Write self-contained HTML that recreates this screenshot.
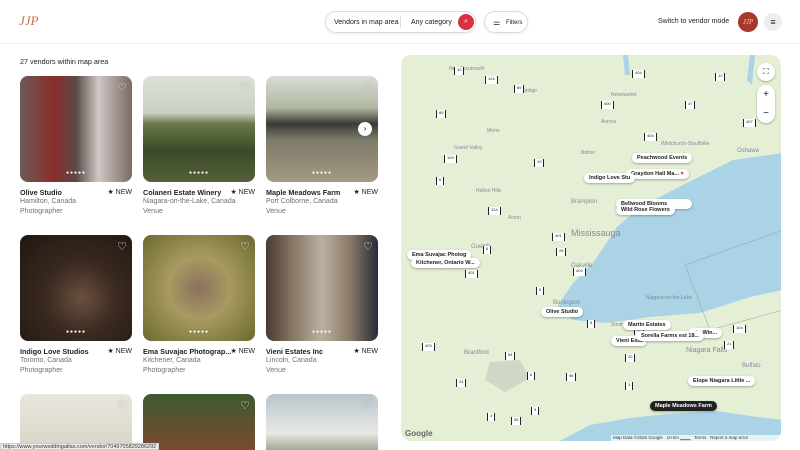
<!DOCTYPE html>
<html><head><meta charset="utf-8"><style>
*{margin:0;padding:0;box-sizing:border-box}
html,body{width:800px;height:450px;overflow:hidden}
body{background:#fff;font-family:"Liberation Sans",sans-serif;color:#222;position:relative}
.hdr{position:absolute;left:0;top:0;width:800px;height:44px;border-bottom:1px solid #eee}
.pill{position:absolute;top:11px;height:22px;border:1px solid #ddd;border-radius:11px;background:#fff;box-shadow:0 1px 3px rgba(0,0,0,.08);font-size:7px;line-height:20px}
.pill span{top:1px}
.t{position:absolute;font-size:7px;white-space:nowrap}
.card{position:absolute;width:112px}
.img{position:absolute;width:112px;height:106px;border-radius:8px;overflow:hidden}
.heart{position:absolute;right:5px;top:5px;font-size:11px;color:#fff;text-shadow:0 0 2px rgba(0,0,0,.6)}
.dots{position:absolute;bottom:6px;left:0;width:100%;text-align:center;font-size:5px;color:#fff;letter-spacing:1px}
.nm{position:absolute;font-size:7.2px;font-weight:bold;white-space:nowrap}
.new{position:absolute;right:0;font-size:7px}
.sub{position:absolute;font-size:7px;color:#717171;white-space:nowrap}
.lbl{position:absolute;background:#fff;border-radius:8px;font-size:5.5px;font-weight:bold;padding:2px 5px;box-shadow:0 1px 2px rgba(0,0,0,.3);white-space:nowrap}
.sh{position:absolute;font-size:4px;border-left:1.5px solid #222;border-right:1.5px solid #222;padding:0 2px;background:#fff;height:8px;line-height:6px}
.town{position:absolute;font-size:5px;color:#889;white-space:nowrap}
</style></head><body>
<div class="hdr">
 <div class="t" style="left:19px;top:13px;font-family:'Liberation Serif',serif;font-size:13px;color:#c0704f;font-style:italic">JJP</div>
 <div class="pill" style="left:325px;width:151px"><span style="position:absolute;left:8px">Vendors in map area</span><span style="position:absolute;left:74px;top:4px;width:1px;height:12px;background:#ddd"></span><span style="position:absolute;left:85px">Any category</span><span style="position:absolute;left:132px;top:2px;width:16px;height:16px;border-radius:8px;background:#d6323f;color:#fff;text-align:center;line-height:16px;font-size:7px">⌕</span></div>
 <div class="pill" style="left:484px;width:44px;font-size:6px"><span style="position:absolute;left:8px;font-size:8px">⚌</span><span style="position:absolute;left:21px">Filters</span></div>
 <div class="t" style="left:658px;top:18px">Switch to vendor mode</div>
 <div style="position:absolute;left:738px;top:12px;width:20px;height:20px;border-radius:10px;background:#a8392a;color:#f3c9b0;font-size:7px;text-align:center;line-height:20px;font-family:'Liberation Serif',serif;font-style:italic">JJP</div>
 <div style="position:absolute;left:764px;top:13px;width:18px;height:18px;border-radius:9px;background:#eee;text-align:center;line-height:18px;font-size:9px">≡</div>
</div>
<div class="t" style="left:20px;top:57px;font-size:7.2px">27 vendors within map area</div>

<div class="card" style="left:20px;top:76px"><div class="img" style="background:linear-gradient(90deg,#6a5a55 0,#8b2e2a 30%,#5a4a48 50%,#cfc8c4 70%,#7a6a66 100%)"><div class="heart">♡</div><div class="dots">●●●●●</div></div><div class="nm" style="top:112px">Olive Studio</div><div class="new" style="top:112px">★ NEW</div><div class="sub" style="top:122px">Hamilton, Canada</div><div class="sub" style="top:132px">Photographer</div></div>
<div class="card" style="left:143px;top:76px"><div class="img" style="background:linear-gradient(180deg,#dbe2d8 0,#c8d0c4 35%,#6b7a4a 45%,#3c4a28 70%,#54603a 100%)"><div class="heart">♡</div><div class="dots">●●●●●</div></div><div class="nm" style="top:112px">Colaneri Estate Winery</div><div class="new" style="top:112px">★ NEW</div><div class="sub" style="top:122px">Niagara-on-the-Lake, Canada</div><div class="sub" style="top:132px">Venue</div></div>
<div class="card" style="left:266px;top:76px"><div class="img" style="background:linear-gradient(180deg,#d8dcd6 0,#b0b8a0 30%,#3a3a34 45%,#7b7a68 60%,#a59a82 100%)"><div class="heart">♡</div><div style="position:absolute;right:6px;top:46px;width:14px;height:14px;border-radius:7px;background:#fff;font-size:8px;text-align:center;line-height:14px">›</div><div class="dots">●●●●●</div></div><div class="nm" style="top:112px">Maple Meadows Farm</div><div class="new" style="top:112px">★ NEW</div><div class="sub" style="top:122px">Port Colborne, Canada</div><div class="sub" style="top:132px">Venue</div></div>
<div class="card" style="left:20px;top:235px"><div class="img" style="background:radial-gradient(circle at 55% 60%,#6a5040 0,#3a2a20 40%,#1e1610 100%)"><div class="heart">♡</div><div class="dots">●●●●●</div></div><div class="nm" style="top:112px">Indigo Love Studios</div><div class="new" style="top:112px">★ NEW</div><div class="sub" style="top:122px">Toronto, Canada</div><div class="sub" style="top:132px">Photographer</div></div>
<div class="card" style="left:143px;top:235px"><div class="img" style="background:radial-gradient(circle at 50% 50%,#8a7060 0,#a89a60 40%,#6a6a30 100%)"><div class="heart">♡</div><div class="dots">●●●●●</div></div><div class="nm" style="top:112px">Ema Suvajac Photograp...</div><div class="new" style="top:112px">★ NEW</div><div class="sub" style="top:122px">Kitchener, Canada</div><div class="sub" style="top:132px">Photographer</div></div>
<div class="card" style="left:266px;top:235px"><div class="img" style="background:linear-gradient(90deg,#4a3a30 0,#8a7a68 25%,#bab0a0 50%,#8a7a68 75%,#2a2a38 100%)"><div class="heart">♡</div><div class="dots">●●●●●</div></div><div class="nm" style="top:112px">Vieni Estates Inc</div><div class="new" style="top:112px">★ NEW</div><div class="sub" style="top:122px">Lincoln, Canada</div><div class="sub" style="top:132px">Venue</div></div>
<div class="card" style="left:20px;top:394px"><div class="img" style="height:56px;border-radius:8px 8px 0 0;background:linear-gradient(180deg,#e8e6dc,#d8d4c8)"><div class="heart">♡</div></div></div>
<div class="card" style="left:143px;top:394px"><div class="img" style="height:56px;border-radius:8px 8px 0 0;background:linear-gradient(180deg,#3c5a30,#7a4a30)"><div class="heart">♡</div></div></div>
<div class="card" style="left:266px;top:394px"><div class="img" style="height:56px;border-radius:8px 8px 0 0;background:linear-gradient(180deg,#b8c4cc,#e8e8e4 70%,#a0a898)"><div class="heart">♡</div></div></div>

<div style="position:absolute;left:401px;top:55px;width:380px;height:386px;border-radius:10px;overflow:hidden;background:#e4efd6">
<svg width="380" height="386" style="position:absolute;left:0;top:0">
<g transform="translate(-401,-55)">
<polygon fill="#aad3e6" points="783,153 733,160 687,183 640,207 617,227 593,263 573,283 557,307 573,320 607,323 650,317 700,313 750,297 783,290"/>
<polygon fill="#aad3e6" points="560,441 590,425 630,418 667,414 717,411 750,416 783,420 783,441"/>
<polygon fill="#aad3e6" points="623,55 628,55 630,75 625,75"/>
<polygon fill="#aad3e6" points="750,55 755,55 752,85 747,80"/>
<polyline fill="none" stroke="#999" stroke-width=".5" points="783,230 685,265 710,330 783,310"/>
<polygon fill="#cfd8c4" points="490,362 520,360 530,378 505,392 485,380"/>
</g></svg>
<div class="town" style="left:48px;top:11px">New Tecumseth</div>
<div class="town" style="left:116px;top:33px">Uxbridge</div>
<div class="town" style="left:200px;top:64px">Aurora</div>
<div class="town" style="left:210px;top:37px">Newmarket</div>
<div class="town" style="left:86px;top:73px">Mono</div>
<div class="town" style="left:53px;top:90px">Grand Valley</div>
<div class="town" style="left:200px;top:120px;font-size:7px">Vaughan</div>
<div class="town" style="left:180px;top:95px">Bolton</div>
<div class="town" style="left:260px;top:86px">Whitchurch-Stouffville</div>
<div class="town" style="left:336px;top:93px;font-size:6px">Oshawa</div>
<div class="town" style="left:170px;top:144px;font-size:6px">Brampton</div>
<div class="town" style="left:170px;top:173px;font-size:9px">Mississauga</div>
<div class="town" style="left:75px;top:133px">Halton Hills</div>
<div class="town" style="left:70px;top:189px;font-size:6px">Guelph</div>
<div class="town" style="left:107px;top:160px">Acton</div>
<div class="town" style="left:170px;top:208px;font-size:6px">Oakville</div>
<div class="town" style="left:152px;top:245px;font-size:6px">Burlington</div>
<div class="town" style="left:63px;top:295px;font-size:6px">Brantford</div>
<div class="town" style="left:285px;top:292px;font-size:7px">Niagara Falls</div>
<div class="town" style="left:341px;top:308px;font-size:6px">Buffalo</div>
<div class="town" style="left:245px;top:240px">Niagara-on-the-Lake</div>
<div class="town" style="left:210px;top:267px">Smithville</div>
<div class="town" style="left:215px;top:283px">Wellandport</div>
<div class="sh" style="left:53px;top:12px">10</div><div class="sh" style="left:84px;top:21px">124</div><div class="sh" style="left:113px;top:30px">89</div><div class="sh" style="left:35px;top:55px">89</div><div class="sh" style="left:200px;top:46px">400</div><div class="sh" style="left:231px;top:15px">404</div><div class="sh" style="left:314px;top:18px">12</div><div class="sh" style="left:284px;top:46px">47</div><div class="sh" style="left:342px;top:64px">407</div><div class="sh" style="left:243px;top:78px">404</div><div class="sh" style="left:43px;top:100px">109</div><div class="sh" style="left:133px;top:104px">10</div><div class="sh" style="left:35px;top:122px">6</div><div class="sh" style="left:87px;top:152px">124</div><div class="sh" style="left:151px;top:178px">401</div><div class="sh" style="left:155px;top:193px">25</div><div class="sh" style="left:82px;top:191px">6</div><div class="sh" style="left:64px;top:215px">401</div><div class="sh" style="left:172px;top:213px">403</div><div class="sh" style="left:135px;top:232px">6</div><div class="sh" style="left:186px;top:265px">6</div><div class="sh" style="left:21px;top:288px">403</div><div class="sh" style="left:104px;top:297px">54</div><div class="sh" style="left:55px;top:324px">24</div><div class="sh" style="left:126px;top:317px">6</div><div class="sh" style="left:165px;top:318px">56</div><div class="sh" style="left:224px;top:299px">20</div><div class="sh" style="left:233px;top:272px">49</div><div class="sh" style="left:224px;top:327px">3</div><div class="sh" style="left:332px;top:270px">104</div><div class="sh" style="left:323px;top:286px">21</div><div class="sh" style="left:130px;top:352px">3</div><div class="sh" style="left:86px;top:358px">3</div><div class="sh" style="left:110px;top:362px">55</div>
<div class="lbl" style="left:231px;top:98px">Peachwood Events</div>
<div class="lbl" style="left:225px;top:114px">Graydon Hall Ma... <span style="color:#e03040">♥</span></div>
<div class="lbl" style="left:183px;top:118px">Indigo Love Stu</div>
<div class="lbl" style="left:215px;top:144px;padding-right:25px">Bellwood Blooms</div>
<div class="lbl" style="left:215px;top:150px">Wild Rose Flowers</div>
<div class="lbl" style="left:6px;top:195px">Ema Suvajac Photog</div>
<div class="lbl" style="left:10px;top:203px">Kitchener, Ontario W...</div>
<div class="lbl" style="left:140px;top:252px">Olive Studio</div>
<div class="lbl" style="left:222px;top:265px">Martin Estates</div>
<div class="lbl" style="left:287px;top:273px">ate Win...</div>
<div class="lbl" style="left:210px;top:281px">Vieni Esta</div>
<div class="lbl" style="left:235px;top:276px">Sorella Farms est 18...</div>
<div class="lbl" style="left:287px;top:321px">Elope Niagara Little ...</div>
<div class="lbl" style="left:249px;top:346px;background:#222;color:#fff">Maple Meadows Farm</div>
<div style="position:absolute;right:6px;top:8px;width:18px;height:18px;border-radius:9px;background:#fff;box-shadow:0 1px 2px rgba(0,0,0,.3);font-size:8px;text-align:center;line-height:18px">⛶</div>
<div style="position:absolute;right:6px;top:30px;width:18px;height:38px;border-radius:9px;background:#fff;box-shadow:0 1px 2px rgba(0,0,0,.3);font-size:10px;text-align:center;line-height:19px">+<br>−</div>
<div class="t" style="left:4px;top:374px;font-size:8px;color:#666;font-weight:bold">Google</div>
<div class="t" style="left:210px;top:380px;font-size:4.5px;color:#333;background:rgba(255,255,255,.7);padding:0 2px;width:170px">Map Data ©2026 Google &nbsp; 10 km ▁▁▁ &nbsp; Terms &nbsp; Report a map error</div>
</div>
<div style="position:absolute;left:0;top:443px;height:7px;background:#eee;border:1px solid #ccc;font-size:5.5px;line-height:6px;padding:0 2px;color:#333">https://www.yourweddingatlas.com/vendor/7049705829286292</div>
</body></html>
